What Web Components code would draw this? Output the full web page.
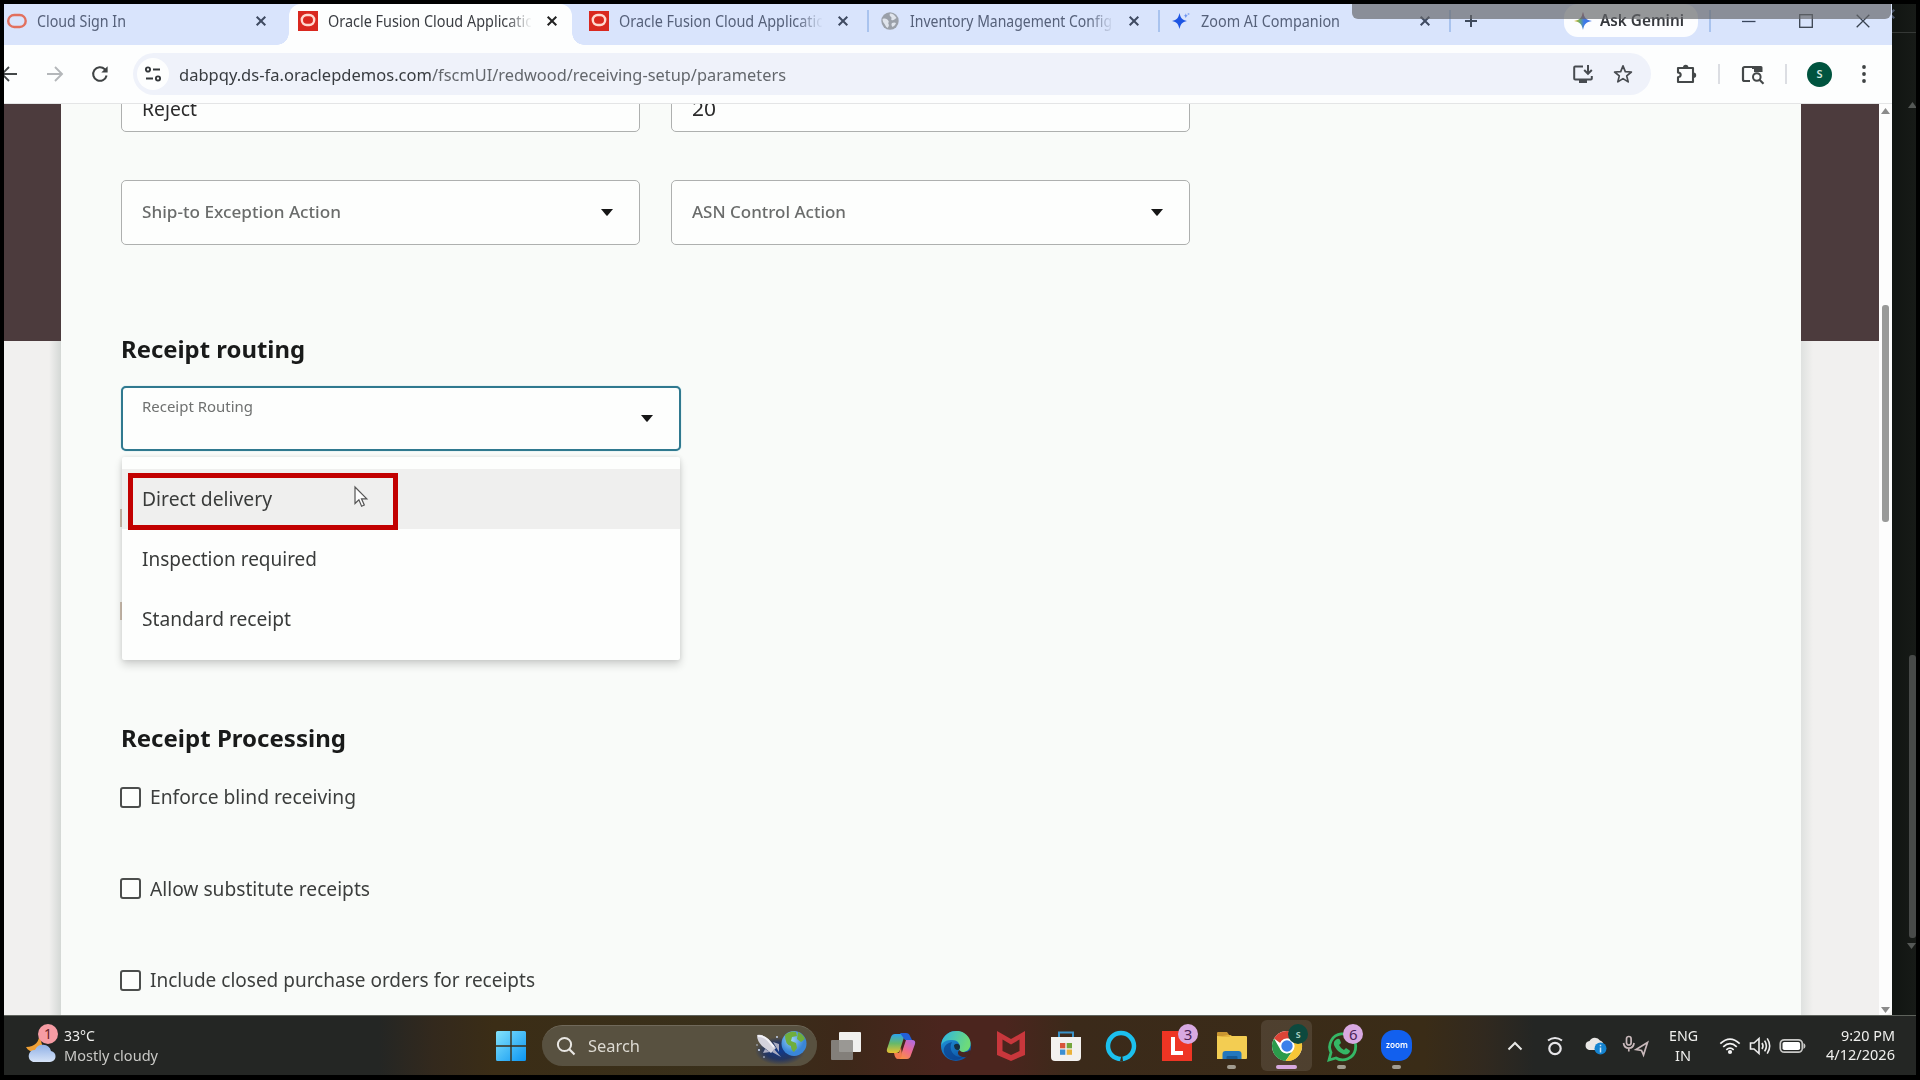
<!DOCTYPE html>
<html lang="en">
<head>
<meta charset="utf-8">
<title>Receiving Parameters</title>
<style>
html,body{margin:0;padding:0;background:#000;overflow:hidden}
body{width:1920px;height:1080px;font-family:"Noto Sans","Open Sans",sans-serif;color:#222}
</style>
</head>
<body>
<desk-screen></desk-screen>
<script>
const define = (name, html, after) => {
  const t = document.createElement('template');
  t.innerHTML = html;
  customElements.define(name, class extends HTMLElement {
    constructor(){ super(); this.attachShadow({mode:'open'}); }
    connectedCallback(){
      if (this.ready) return;
      this.ready = true;
      this.shadowRoot.appendChild(t.content.cloneNode(true));
      if (after) after(this, this.shadowRoot);
    }
  });
};

/* Text run set to a known advance width. */
const ctx = document.createElement('canvas').getContext('2d');
define('fit-text', `<style>
:host{display:block;white-space:pre;flex:none}
span{display:inline-block;transform-origin:0 0;vertical-align:top}
</style><span><slot></slot></span>`, (el, root) => {
  const w = +el.getAttribute('w'), size = el.getAttribute('size'), weight = el.getAttribute('weight') || 400;
  ctx.font = `${weight} ${size}px "Noto Sans"`;
  const natural = ctx.measureText(el.textContent).width;
  el.style.cssText += `;font-size:${size}px;font-weight:${weight};width:${w}px`;
  root.querySelector('span').style.transform = `scaleX(${w / natural})`;
});

const ICONS = {
  oracleO: [20,20,`<rect x="1.2" y="4" width="17.5" height="12" rx="6" fill="none" stroke="#e2705e" stroke-width="2.4"/>`],
  oracle: [20,20,`<rect width="20" height="20" fill="#d9281f"/><rect x="3.8" y="4" width="12.4" height="10" rx="5" fill="none" stroke="#ffd9cf" stroke-width="2.4"/>`],
  globe: [18,18,`<circle cx="9" cy="9" r="8.7" fill="#9aa0a9"/><path d="M1.500 7c3-1 5 0 6 2 1 1-1 2 0 3s0 3-1 4c-2-1-2-3-3-4-1-1-2-3-2-5zM9 1.500c3 0 5 2 6.500 4.500-2 1-3 3-5 2-1-1 1-2-.500-3C9 4 8 3 9 1.500zM11 11c2-1 3-.500 4 0-.500 2-2 3-3.500 4-1-1-1.500-3-.500-4z" fill="#dfe4ec"/>`],
  spark: [20,20,`<path d="M8.500 2c1.200 5.200 2.500 6.600 7.500 8-5 1.400-6.300 2.800-7.500 8-1.200-5.200-2.500-6.600-7.500-8 5-1.400 6.300-2.800 7.500-8z" fill="#1e55e3"/><path d="M14.800 2.200c.4 1.700.7 2 2.200 2.500-1.500.5-1.800.8-2.200 2.500-.4-1.700-.7-2-2.200-2.500 1.500-.5 1.800-.8 2.200-2.500z" fill="#6d94ee"/><circle cx="17.500" cy="3" r="1" fill="#8fb0f3"/>`],
  x: [12,12,`<path d="M1.700 1.700l8.600 8.600M10.300 1.700l-8.600 8.600" stroke="currentColor" stroke-width="2"/>`],
  plus: [14,14,`<path d="M7 1v12M1 7h12" stroke="#3f4a5c" stroke-width="2"/>`],
  gemini: [20,20,`<defs><linearGradient id="g" x1="0" x2="1" y1=".5" y2=".5"><stop offset="0" stop-color="#f3b51e"/><stop offset=".3" stop-color="#6fae68"/><stop offset=".55" stop-color="#3d7bea"/><stop offset="1" stop-color="#3d6fe0"/></linearGradient><linearGradient id="h" x1="0" x2="0" y1="0" y2="1"><stop offset="0" stop-color="#ea4335" stop-opacity=".9"/><stop offset=".45" stop-color="#ea4335" stop-opacity="0"/></linearGradient></defs><path d="M10 1c1.200 6 3 7.800 9 9-6 1.200-7.800 3-9 9-1.200-6-3-7.800-9-9 6-1.200 7.800-3 9-9z" fill="url(#g)"/><path d="M10 1c1.200 6 3 7.800 9 9-6 1.200-7.800 3-9 9-1.200-6-3-7.800-9-9 6-1.200 7.800-3 9-9z" fill="url(#h)"/>`],
  min: [14,14,`<path d="M0 7.500h13.500" stroke="#39455c" stroke-width="1.300"/>`],
  max: [14,14,`<rect x=".7" y=".7" width="12.600" height="12.600" fill="none" stroke="#39424f" stroke-width="1.300"/>`],
  close: [14,14,`<path d="M.7.700l12.600 12.600M13.300.700L.7 13.300" stroke="#39424f" stroke-width="1.300"/>`],
  back: [18,18,`<path d="M17 9H2.500M9 2L2 9l7 7" fill="none" stroke="#444849" stroke-width="1.900"/>`],
  fwd: [18,18,`<path d="M1 9h14.500M9 2l7 7-7 7" fill="none" stroke="#b4b7ba" stroke-width="1.900"/>`],
  reload: [18,18,`<path d="M15.600 10.500A6.800 6.800 0 1 1 13.800 4.200L15.500 6" fill="none" stroke="#3f4344" stroke-width="2"/><path d="M16.600 1.200v6.300h-6.300z" fill="#3f4344"/>`],
  tune: [18,18,`<g fill="none" stroke="#34383b" stroke-width="1.900"><circle cx="4" cy="4.500" r="2.100"/><path d="M9 4.500h7M2 13.500h7"/><circle cx="14" cy="13.500" r="2.100"/></g>`],
  install: [22,20,`<path d="M11 2.500H3.200a1 1 0 0 0-1 1v11a1 1 0 0 0 1 1h15.600a1 1 0 0 0 1-1V12" fill="none" stroke="#474b50" stroke-width="2"/><path d="M7 16h8v3H7z" fill="#474b50"/><path d="M16 1v8.500M12.200 6l3.800 3.800L19.800 6" fill="none" stroke="#474b50" stroke-width="2"/>`],
  star: [20,20,`<path d="M10 1.900l2.300 5.700 6.100.4-4.700 3.900 1.500 6L10 14.600 4.800 17.900l1.500-6L1.600 8l6.100-.4z" fill="none" stroke="#474b50" stroke-width="1.700" stroke-linejoin="round"/>`],
  puzzle: [22,22,`<path d="M3 9.500V5h15v14H3v-4.800c3.600-.3 3.600-4.400 0-4.700z" fill="none" stroke="#444849" stroke-width="2.100" stroke-linejoin="round"/><path d="M8 4.500a2.700 2.700 0 0 1 5.400 0zM18.500 9.500a2.700 2.700 0 0 1 0 5.400z" fill="#444849"/>`],
  tabsearch: [24,22,`<path d="M10 18H4.500A1.500 1.500 0 0 1 3 16.500v-11A1.500 1.500 0 0 1 4.500 4H21" fill="none" stroke="#444849" stroke-width="2.200"/><path d="M12 3h9a1.500 1.500 0 0 1 1.500 1.500V9H14V6h-2z" fill="#444849"/><circle cx="16.800" cy="14" r="3.800" fill="none" stroke="#444849" stroke-width="2"/><path d="M19.500 16.800l4 4" stroke="#444849" stroke-width="2.200"/>`],
  dots: [6,20,`<g fill="#3f4344"><circle cx="3" cy="3" r="1.900"/><circle cx="3" cy="10" r="1.900"/><circle cx="3" cy="17" r="1.900"/></g>`],
  caret: [12,7,`<path d="M0 0h12L6.600 6.500q-.6.500-1.200 0z" fill="#161616"/>`],
  pointer: [14,22,`<path d="M1 1v16.500l3.900-3.700L7.600 20.200l2.700-1.200L7.500 12.800h5.300z" fill="#fdfdfd" stroke="#555" stroke-width="1.200"/>`],
  weather: [36,38,`<path d="M15 8c1 7-4 13-13 13 3 6 13 7 17 1z" fill="#f0a035"/><defs><linearGradient id="c" x1="0" x2="0" y1="0" y2="1"><stop offset="0" stop-color="#8fb0e6"/><stop offset="1" stop-color="#d6e3f7"/></linearGradient></defs><path d="M9 36h17a5.600 5.600 0 0 0 1-11.100 8.500 8.500 0 0 0-16-1A6.200 6.200 0 0 0 9 36z" fill="url(#c)"/>`],
  win: [30,30,`<defs><linearGradient id="w" x1="0" y1="0" x2="1" y2="1"><stop offset="0" stop-color="#84e3fb"/><stop offset="1" stop-color="#0b95f2"/></linearGradient></defs><path d="M0 1.500Q0 0 1.500 0H14.300V14.300H0zM15.700 0H28.500Q30 0 30 1.500V14.300H15.700zM0 15.700H14.300V30H1.500Q0 30 0 28.500zM15.700 15.700H30V28.500Q30 30 28.500 30H15.700z" fill="url(#w)"/>`],
  search: [20,20,`<circle cx="8.500" cy="8.500" r="6.600" fill="none" stroke="#e9e7e3" stroke-width="2"/><path d="M13.300 13.300l5.200 5.200" stroke="#e9e7e3" stroke-width="2.200"/>`],
  rocket: [56,34,`<defs><radialGradient id="n"><stop offset="0" stop-color="#10398e"/><stop offset=".6" stop-color="#182f68" stop-opacity=".8"/><stop offset="1" stop-color="#182f68" stop-opacity="0"/></radialGradient><radialGradient id="e" cx=".4" cy=".35"><stop offset="0" stop-color="#9bd3f5"/><stop offset="1" stop-color="#3a86d8"/></radialGradient></defs><ellipse cx="28" cy="22" rx="25" ry="14" fill="url(#n)"/><path d="M5 6q6-1 11 4l8 9-5 5-9-7Q5 12 5 6z" fill="#d3d2dc"/><path d="M6 7q6 0 10 4l6 7" stroke="#f3f2f7" stroke-width="2" fill="none"/><path d="M13 20l-2 4 7-1zM21 13l6 2 0 8zM22 20l7 8-9-5z" fill="#a9abc0"/><circle cx="42" cy="14.500" r="12.500" fill="url(#e)"/><path d="M33 6q6-5 11-3l1 4-5 1-1 4 5 2 1 5-3 4q-3-2-3-6-6-1-6-11zM46 3q5 2 7 7l-4 3-4-3z" fill="#6fae3d"/><g fill="#cfe0ff"><circle cx="7" cy="21" r="1"/><circle cx="12" cy="28" r=".8"/><circle cx="25" cy="8" r=".9"/><circle cx="5" cy="16" r=".7"/></g>`],
  taskview: [30,30,`<rect x="8" y="1" width="22" height="20" rx="1" fill="#f0f0ee"/><rect x="0" y="9" width="22" height="20" rx="1" fill="#8d8b88" opacity=".88"/>`],
  copilot: [30,28,`<defs><linearGradient id="a" x1="0" y1="0" x2="0" y2="1"><stop offset="0" stop-color="#2ba4ee"/><stop offset=".5" stop-color="#67b96a"/><stop offset="1" stop-color="#eac12f"/></linearGradient><linearGradient id="b" x1=".8" y1="0" x2=".2" y2="1"><stop offset="0" stop-color="#b26be0"/><stop offset=".5" stop-color="#ee6a8d"/><stop offset="1" stop-color="#f7943e"/></linearGradient></defs><path d="M9 2h10l-5 16q-1 3-4 3H4q-4 0-3-4L5 5q1-3 4-3z" fill="url(#a)"/><path d="M14 1h6q3 0 4 3l2 4h-7z" fill="#2360d8"/><path d="M20 8h6q4 0 3 4l-4 11q-1 4-4 4H11q3 0 4-4z" fill="url(#b)"/><path d="M8 21h5l2-6 1 8q-1 4-4 4t-4-6z" fill="#f27a4f"/>`],
  edge: [32,32,`<defs><linearGradient id="p" x1="0" y1="0" x2="1" y2=".3"><stop offset="0" stop-color="#2bb4e8"/><stop offset="1" stop-color="#6edb79"/></linearGradient><linearGradient id="q" x1="0" y1="0" x2=".6" y2="1"><stop offset="0" stop-color="#23a0e4"/><stop offset="1" stop-color="#0d55a7"/></linearGradient></defs><circle cx="16" cy="16" r="15" fill="url(#q)"/><path d="M2 11C6 1 17-1 24 3s8 12 5 16-11 4-10 1c3-5-1-10-7-10-5 0-9 1-11 6z" fill="url(#p)"/><path d="M12 12c-4 7 1 16 11 15-5 4-12 4-17-1-4-5-3-12 6-14z" fill="#0a3f8c" opacity=".7"/><path d="M19.500 20c2 3 7 3 10.500 0l1 3q-2 3-5 4c-5 1-11-3-6.500-7z" fill="#472621"/><path d="M14 15q4-3 6 1 0 4-2 4-4 0-4-5z" fill="#16303f"/>`],
  mcafee: [28,30,`<path d="M0 0l14 8L28 0v24l-14 6-14-6zM5.500 8.500V20L14 24l8.500-4V8.500L14 13.500z" fill="#c8373c" fill-rule="evenodd"/>`],
  store: [30,32,`<path d="M8 8V2.500h14V8" fill="none" stroke="#3a93c9" stroke-width="2"/><path d="M0 7h30v20q0 4-4 4H4q-4 0-4-4z" fill="#f3f1ef"/><path d="M9 13h5.300v5.300H9z" fill="#d8553b"/><path d="M15.700 13H21v5.300h-5.300z" fill="#74a63c"/><path d="M9 19.500h5.300v5.300H9z" fill="#3c8fd2"/><path d="M15.700 19.500H21v5.300h-5.300z" fill="#eab13a"/>`],
  alexa: [32,32,`<circle cx="16" cy="16" r="13" fill="none" stroke="#1cc0ee" stroke-width="4.500"/><path d="M15 31l2-7 1 7z" fill="#3a2c19"/>`],
  linkL: [30,30,`<rect width="30" height="30" fill="#ee3524"/><path d="M11 6v16h10" fill="none" stroke="#fff" stroke-width="4"/>`],
  folder: [32,30,`<path d="M1 2q0-1 1-1h9l3 4v5H1z" fill="#c99632"/><path d="M1 5h29q1 0 1 1v21q0 1-1 1H1z" fill="#f3cd52"/><path d="M1 6h12l3-2h-4z" fill="#e5b53d"/><path d="M6.500 28v-5q0-3 3-3h13q3 0 3 3v5z" fill="#2377bd"/><path d="M10.500 28v-2q0-1 1-1h9q1 0 1 1v2z" fill="#155a96"/>`],
  chrome: [32,32,`<circle cx="16" cy="16" r="15" fill="#fff"/><path d="M3 8.500A15 15 0 0 1 29 8.500H16a7.500 7.500 0 0 0-6.800 4.500z" fill="#dc4437"/><path d="M3 8.500A15 15 0 0 0 14.500 31L21.500 21a7.500 7.500 0 0 1-12-1.300z" fill="#2b9b4b"/><path d="M29 8.500A15 15 0 0 1 14.500 31L22 20.500a7.500 7.500 0 0 0-1.500-10.500z" fill="#f6c636"/><circle cx="16" cy="16" r="7.300" fill="#fff"/><circle cx="16" cy="16" r="5.700" fill="#3d80ea"/>`],
  whatsapp: [32,32,`<path d="M3 30l2-7.500A13 13 0 1 1 10 28z" fill="none" stroke="#35b765" stroke-width="2.800"/><path d="M11 9q2-1 3 1l1 3-2 2q2 4 5 5l2-2 3 2q2 1 0 3-3 3-8 0-5-3-7-8-1-4 3-6z" fill="#35b765"/>`],
  up: [16,12,`<path d="M1.500 9.500L8 3l6.500 6.500" fill="none" stroke="#e8e8e6" stroke-width="2"/>`],
  ring: [18,20,`<circle cx="9" cy="12.500" r="5.700" fill="none" stroke="#e6e5e8" stroke-width="2.200"/><path d="M2 4.500q7-5 14 0" fill="none" stroke="#e6e5e8" stroke-width="2"/>`],
  cloud: [24,20,`<path d="M5 14h11a5 5 0 0 0 0-9.500A6 6 0 0 0 5.500 5 4.600 4.600 0 0 0 5 14z" fill="#e9e7e5"/><circle cx="16.500" cy="12.500" r="6" fill="#1583d0"/><path d="M16.500 8.700v1.600M16.500 11.500v5" stroke="#cfe6f8" stroke-width="1.500"/>`],
  mic: [28,22,`<g fill="none" stroke="#c9b9bb" stroke-width="1.700"><rect x="4.500" y="1.500" width="4.600" height="8.500" rx="2.300"/><path d="M1.500 8q.8 5.200 5.300 5.200T12.100 8M6.800 13v3.500"/><path d="M25.500 7.500L14 14.500l5.500 1 2 4.500z"/></g>`],
  wifi: [22,18,`<g fill="none" stroke="#f2f2f2" stroke-width="1.700"><path d="M1.300 6.700Q11-2.500 20.700 6.700M4.200 9.800Q11 3.500 17.800 9.800M7.300 12.800Q11 9.500 14.700 12.800"/></g><circle cx="11" cy="15" r="2.100" fill="#f2f2f2"/>`],
  sound: [22,20,`<g fill="none" stroke="#eee" stroke-width="1.600"><path d="M1.500 7v6h3.500l5 4.500v-15L5 7z"/><path d="M13 7q2 3 0 6M15.600 4.600q3.600 5.400 0 10.800M18.200 2.400q5 7.600 0 15.200"/></g>`],
  battery: [28,16,`<rect x="1.300" y="1.800" width="22" height="12.400" rx="4" fill="none" stroke="#c9c9c7" stroke-width="1.700"/><rect x="3.500" y="4" width="17.600" height="8" rx="1.800" fill="#fff"/><path d="M24.500 5q2 1 2 3t-2 3z" fill="#c9c9c7"/>`],
  triUp: [9,6,`<path d="M4.500 0L9 6H0z" fill="currentColor"/>`],
  triDown: [9,6,`<path d="M0 0h9L4.500 6z" fill="currentColor"/>`]
};
define('ui-icon', `<style>:host{display:block;flex:none;line-height:0}svg{display:block;overflow:visible}</style><div></div>`, (el, root) => {
  const [w,h,b] = ICONS[el.getAttribute('name')];
  root.querySelector('div').innerHTML = `<svg width="${w}" height="${h}" viewBox="0 0 ${w} ${h}">${b}</svg>`;
});

define('tab-icon', `<style>:host{display:flex;justify-content:center;width:20px;margin-right:10px;flex:none}</style><slot></slot>`);
define('page-tab', `<style>
:host{display:flex;align-items:center;box-sizing:border-box;width:291px;flex:none;height:41px;padding:0 0 8px 9px;color:#56617a;position:relative}
:host([active]){color:#3a3d42;background:#fdfefe;border-radius:12px 12px 0 0;width:283px;margin-right:8px}
:host([active])::before,:host([active])::after{content:"";position:absolute;bottom:0;width:12px;height:12px}
:host([active])::before{left:-12px;background:radial-gradient(circle at 0 0,transparent 11.500px,#fdfefe 12px)}
:host([active])::after{right:-12px;background:radial-gradient(circle at 100% 0,transparent 11.500px,#fdfefe 12px)}
.t{width:203px;flex:none;overflow:hidden;line-height:24px;height:24px}
:host([fade]) .t{-webkit-mask-image:linear-gradient(90deg,#000 178px,transparent 204px)}
.x{margin-left:15px;color:#3f4a61}
:host([active]) .x{color:#222}
i{width:2px;height:22px;background:#a9c3ee;margin-left:18px;flex:none}
:host([nosep]) i{display:none}
</style><tab-icon><slot name="icon"></slot></tab-icon><div class="t"><slot></slot></div><ui-icon class="x" name="x"></ui-icon><i></i>`);

define('tab-strip', `<style>
:host{display:flex;align-items:center;height:41px;background:#d9e4fc;overflow:hidden;position:relative}
page-tab:first-of-type{margin-left:-6px}
.plus{margin:-7px 0 0 11px}
.ask{display:flex;align-items:center;height:33px;width:134px;box-sizing:border-box;padding:0 0 0 9px;gap:7px;background:#fcfdff;border-radius:14px;margin:-9px 0 0 86px;color:#35383d;line-height:24px}
i{width:2px;height:22px;background:#a9c3ee;margin:-7px 0 0 11px}
.m{margin:-7px 0 0 31px}.q{margin:-7px 0 0 43px}.c{margin:-7px 0 0 43px}
.ask ui-icon{margin-top:2px}
.share{position:absolute;left:1348px;top:0;width:539px;height:14.500px;background:rgba(100,101,104,.68);border-radius:0 0 6px 6px}
</style>
<page-tab nosep><ui-icon slot="icon" name="oracleO"></ui-icon><fit-text w="89" size="15.5">Cloud Sign In</fit-text></page-tab>
<page-tab active fade nosep><ui-icon slot="icon" name="oracle"></ui-icon><fit-text w="206" size="15.5">Oracle Fusion Cloud Applicatio</fit-text></page-tab>
<page-tab fade><ui-icon slot="icon" name="oracle"></ui-icon><fit-text w="206" size="15.5">Oracle Fusion Cloud Applicatio</fit-text></page-tab>
<page-tab fade><ui-icon slot="icon" name="globe"></ui-icon><fit-text w="202" size="15.5">Inventory Management Config</fit-text></page-tab>
<page-tab><ui-icon slot="icon" name="spark"></ui-icon><fit-text w="139" size="15.5">Zoom AI Companion</fit-text></page-tab>
<ui-icon class="plus" name="plus"></ui-icon>
<div class="ask"><ui-icon name="gemini"></ui-icon><fit-text w="84" size="15.5" weight="600">Ask Gemini</fit-text></div>
<i></i><ui-icon class="m" name="min"></ui-icon><ui-icon class="q" name="max"></ui-icon><ui-icon class="c" name="close"></ui-icon>
<div class="share"></div>`);

define('address-bar', `<style>
:host{display:flex;align-items:center;height:59px;box-sizing:border-box;background:#fdfefe;border-bottom:1px solid #e4e5e6;overflow:hidden}
.b{margin-left:-4px}.f{margin-left:28px}.r{margin-left:27px}
.omni{display:flex;align-items:center;margin-left:24px;width:1518px;box-sizing:border-box;height:42px;border-radius:21px;background:#eff2fa;padding-left:4px;line-height:28px}
.site{width:32px;height:32px;border-radius:50%;background:#fdfefe;display:flex;align-items:center;justify-content:center;margin-right:10px}
fit-text{margin-top:2px}
.d{color:#383c40}.p{color:#63676c}
.in{margin-left:786px}.st{margin-left:19px}
.pz{margin-left:24px}.s{width:2px;height:20px;background:#dcdee3;margin-left:21px}
.ts{margin-left:20px}
.av{width:25px;height:25px;border-radius:50%;background:#00543f;color:#cfe6df;font-size:11px;font-weight:600;line-height:24px;text-align:center;margin-left:20px}
.dt{margin-left:29px}
</style>
<ui-icon class="b" name="back"></ui-icon><ui-icon class="f" name="fwd"></ui-icon><ui-icon class="r" name="reload"></ui-icon>
<div class="omni"><div class="site"><ui-icon name="tune"></ui-icon></div>
<fit-text class="d" w="253" size="17">dabpqy.ds-fa.oraclepdemos.com</fit-text><fit-text class="p" w="354" size="17">/fscmUI/redwood/receiving-setup/parameters</fit-text>
<ui-icon class="in" name="install"></ui-icon><ui-icon class="st" name="star"></ui-icon></div>
<ui-icon class="pz" name="puzzle"></ui-icon><div class="s"></div><ui-icon class="ts" name="tabsearch"></ui-icon><div class="s"></div>
<div class="av">S</div><ui-icon class="dt" name="dots"></ui-icon>`);

define('form-field', `<style>
:host{display:flex;align-items:center;justify-content:space-between;box-sizing:border-box;width:519px;height:65px;border:1.500px solid #aeb0af;border-radius:5px;background:#fdfefd;padding:0 26px 0 19.500px;color:#6a6c6b;line-height:26px}
:host([focus]){width:560px;border:2px solid #30798f;padding:0 26px 0 18.500px;box-shadow:0 0 1px #71b6cc;color:#6f7170}
:host([focus]) .l{margin-top:-25px}
:host([value]){color:#2b2b2b;align-items:flex-end;padding-bottom:9px}
:host([value]) ui-icon{display:none}
</style><div class="l"><slot></slot></div><ui-icon name="caret"></ui-icon>`);

define('list-option', `<style>
:host{display:block;height:60px;line-height:60px;padding-left:19.500px;color:#393b3a}
:host([hover]){background:#efefee}
</style><slot></slot>`);
define('option-list', `<style>
:host{display:block;box-sizing:border-box;width:558px;height:203px;padding-top:11.500px;background:#fdfefd;box-shadow:0 5px 9px rgba(0,0,0,.16),0 0 4px rgba(0,0,0,.1);border-radius:2px}
</style><slot></slot>`);
define('check-row', `<style>
:host{display:flex;align-items:center;gap:9px;height:22px;color:#3c3e3d;line-height:28px}
.b{width:21px;height:21px;box-sizing:border-box;border:2px solid #4c4e4d;border-radius:3px;background:#fdfefd;flex:none}
</style><div class="b"></div><slot></slot>`);

define('setup-page', `<style>
:host{display:flex;height:911px;overflow:hidden;background:#f1f0ef}
.side{height:911px;background:linear-gradient(#4c3b3d 237px,#f1f0ef 237px);position:relative;flex:none}
.l{width:57px}.r{width:78px}
.side::after{content:"";position:absolute;top:237px;bottom:0;width:12px}
.l::after{right:0;background:linear-gradient(90deg,rgba(200,206,203,0),rgba(205,210,207,.8))}
.r::after{left:0;background:linear-gradient(270deg,rgba(200,206,203,0),rgba(215,219,217,.7))}
main{width:1740px;flex:none;background:#f9fbf9;box-sizing:border-box;padding-left:60px;height:911px;overflow:hidden}
.row{display:flex;gap:31px}
.cut{margin-top:-37px;margin-bottom:47.500px}
.h{color:#191a1a;line-height:36px;margin-left:-.5px}
.routing{position:relative;margin-top:19.500px;height:65px}
option-list{position:absolute;left:1px;top:71px}
.tick{position:absolute;left:-1px;width:2px;height:18px;background:#cfc0b1}
.mark{position:absolute;left:7px;top:87px;width:270px;height:57px;box-sizing:border-box;border:5px solid #c20000}
.ptr{position:absolute;left:233px;top:100px}
.checks{display:flex;flex-direction:column;gap:69.500px;margin:30px 0 0 -1px}
.bar{width:13px;background:#fdfdfd;display:flex;flex-direction:column;align-items:center;color:#8b8b8b;padding-top:4px;box-sizing:border-box;border-radius:0 0 8px 0}
.thumb{width:7px;height:217px;border-radius:3px;background:#999a99;margin:191px 0 485px}
</style>
<div class="side l"></div>
<main>
<div class="row cut"><form-field value><fit-text w="55" size="19">Reject</fit-text></form-field><form-field value><fit-text w="24" size="19">20</fit-text></form-field></div>
<div class="row"><form-field><fit-text w="199" size="16.5" weight="500">Ship-to Exception Action</fit-text></form-field><form-field><fit-text w="154" size="16.5" weight="500">ASN Control Action</fit-text></form-field></div>
<fit-text class="h" style="margin-top:86px" w="184" size="24" weight="700">Receipt routing</fit-text>
<div class="routing"><form-field focus><fit-text w="111" size="14.5">Receipt Routing</fit-text></form-field>
<div class="tick" style="top:123px"></div><div class="tick" style="top:216px"></div>
<option-list><list-option hover><fit-text w="130" size="20">Direct delivery</fit-text></list-option><list-option><fit-text w="175" size="20">Inspection required</fit-text></list-option><list-option><fit-text w="149" size="20">Standard receipt</fit-text></list-option></option-list>
<div class="mark"></div><ui-icon class="ptr" name="pointer"></ui-icon></div>
<fit-text class="h" style="margin-top:269px" w="225" size="24" weight="700">Receipt Processing</fit-text>
<div class="checks"><check-row><fit-text w="206" size="20">Enforce blind receiving</fit-text></check-row><check-row><fit-text w="220" size="20">Allow substitute receipts</fit-text></check-row><check-row><fit-text w="385" size="20">Include closed purchase orders for receipts</fit-text></check-row></div>
</main>
<div class="side r"></div>
<div class="bar"><ui-icon name="triUp"></ui-icon><div class="thumb"></div><ui-icon name="triDown"></ui-icon></div>`);

define('task-app', `<style>
:host{display:flex;align-items:center;justify-content:center;width:51px;height:51px;margin-right:4.100px;position:relative;border-radius:6px;flex:none}
:host([current]){background:rgba(255,255,255,.1)}
.bar{position:absolute;bottom:2px;left:21px;width:9px;height:4px;border-radius:2px;background:#a19c90;display:none}
:host([open]) .bar{display:block}
:host([current]) .bar{display:block;left:15px;width:21px;background:#d7a9df}
.badge{position:absolute;left:27px;top:4px;width:20px;height:20px;border-radius:50%;background:#d8a9e2;color:#4b2356;font-size:15px;line-height:20px;text-align:center;display:none}
:host([badge]) .badge{display:block}
:host([current]) .badge{background:#0d493e;color:#a8cfc2;font-size:10px;font-weight:600}
</style><slot></slot><div class="bar"></div><div class="badge"></div>`, (el, root) => {
  root.querySelector('.badge').textContent = el.getAttribute('badge') || '';
});

define('task-bar', `<style>
:host{display:flex;align-items:center;height:60px;box-sizing:border-box;border-top:1.500px solid #5e625c;color:#f0f0ee;
background:linear-gradient(90deg,#242624 0,#242624 375px,#33291d 430px,#3b2d16 490px,#39301b 720px,#3d2819 840px,#4b251e 940px,#4b251e 1000px,#3b2a1a 1070px,#3a2c17 1420px,#31291f 1480px,#242624 1530px)}
.weather{display:flex;align-items:center;width:471px;padding-left:20px;box-sizing:border-box;position:relative;gap:4px;margin-right:20.500px;flex:none}
.w1{line-height:20px;margin-top:-2px}.w1 .dim{color:#c9c9c6}
.one{position:absolute;left:34px;top:-3px;width:20px;height:20px;border-radius:50%;background:#f69ca4;color:#681f28;font-size:14px;line-height:20px;text-align:center}
.weather ui-icon{margin-top:-2px}
.find{display:flex;align-items:center;width:275px;height:41px;box-sizing:border-box;border-radius:21px;background:#585140;border-top:1px solid #70695a;padding:0 9px 0 14px;margin:0 3.500px 0 16.500px;line-height:26px;color:#dddad2;flex:none}
.find fit-text{margin:0 auto 0 12px}
.zoom{width:31px;height:31px;border-radius:13px;background:#1260ee;display:flex;align-items:center;justify-content:center;color:#fff;line-height:26px}
.zoom fit-text{margin-top:-2px}
.tray{display:flex;align-items:center;margin-left:80px;flex:none}
.lang{display:flex;flex-direction:column;align-items:center;line-height:19.500px;margin:0 21px 0 19px}
.clock{display:flex;flex-direction:column;align-items:flex-end;line-height:19.500px;margin:-1px 0 0 19px}
</style>
<div class="weather"><ui-icon name="weather"></ui-icon><div class="one">1</div><div class="w1"><fit-text w="31" size="15">33°C</fit-text><fit-text class="dim" w="94" size="15">Mostly cloudy</fit-text></div></div>
<ui-icon name="win"></ui-icon>
<div class="find"><ui-icon name="search"></ui-icon><fit-text w="52" size="17">Search</fit-text><ui-icon name="rocket"></ui-icon></div>
<task-app><ui-icon name="taskview"></ui-icon></task-app>
<task-app><ui-icon name="copilot"></ui-icon></task-app>
<task-app><ui-icon name="edge"></ui-icon></task-app>
<task-app><ui-icon name="mcafee"></ui-icon></task-app>
<task-app><ui-icon name="store"></ui-icon></task-app>
<task-app><ui-icon name="alexa"></ui-icon></task-app>
<task-app badge="3"><ui-icon name="linkL"></ui-icon></task-app>
<task-app open><ui-icon name="folder"></ui-icon></task-app>
<task-app current badge="s"><ui-icon name="chrome"></ui-icon></task-app>
<task-app open badge="6"><ui-icon name="whatsapp"></ui-icon></task-app>
<task-app open><div class="zoom"><fit-text w="22" size="9" weight="600">zoom</fit-text></div></task-app>
<div class="tray">
<ui-icon name="up"></ui-icon><ui-icon name="ring" style="margin-left:23px"></ui-icon><ui-icon name="cloud" style="margin-left:20px"></ui-icon><ui-icon name="mic" style="margin-left:14px"></ui-icon>
<div class="lang"><fit-text w="29" size="15">ENG</fit-text><fit-text w="16" size="15">IN</fit-text></div>
<ui-icon name="wifi"></ui-icon><ui-icon name="sound" style="margin-left:8px"></ui-icon><ui-icon name="battery" style="margin-left:8px"></ui-icon>
<div class="clock"><fit-text w="54" size="15">9:20 PM</fit-text><fit-text w="69" size="15">4/12/2026</fit-text></div>
</div>`);

define('desk-screen', `<style>
:host{display:block;box-sizing:border-box;width:1920px;height:1080px;padding:4px 4px 5px;background:#000}
.top{display:flex;height:1011px}
.win{width:1888px;flex:none;background:#161816}
.behind{width:24px;background:linear-gradient(90deg,#111512,#171a17);display:flex;flex-direction:column;align-items:flex-end;box-sizing:border-box;color:#555856;overflow:hidden}
.cap{height:29px;width:24px;border-bottom:1px solid #353836;display:flex;align-items:flex-start;padding:4px 0 0;box-sizing:border-box;color:#4a5468}
.cap ui-icon{margin-left:-8px}
.t2{width:7px;height:283px;border-radius:3px;background:#484a49;margin-top:547px}
</style>
<div class="top"><div class="win"><tab-strip></tab-strip><address-bar></address-bar><setup-page></setup-page></div>
<div class="behind"><div class="cap"><ui-icon name="x"></ui-icon></div><ui-icon name="triUp" style="margin:69px -1px 0 0"></ui-icon><div class="t2"></div><ui-icon name="triDown" style="margin-top:5px"></ui-icon></div></div>
<task-bar></task-bar>`);
</script>
</body>
</html>
